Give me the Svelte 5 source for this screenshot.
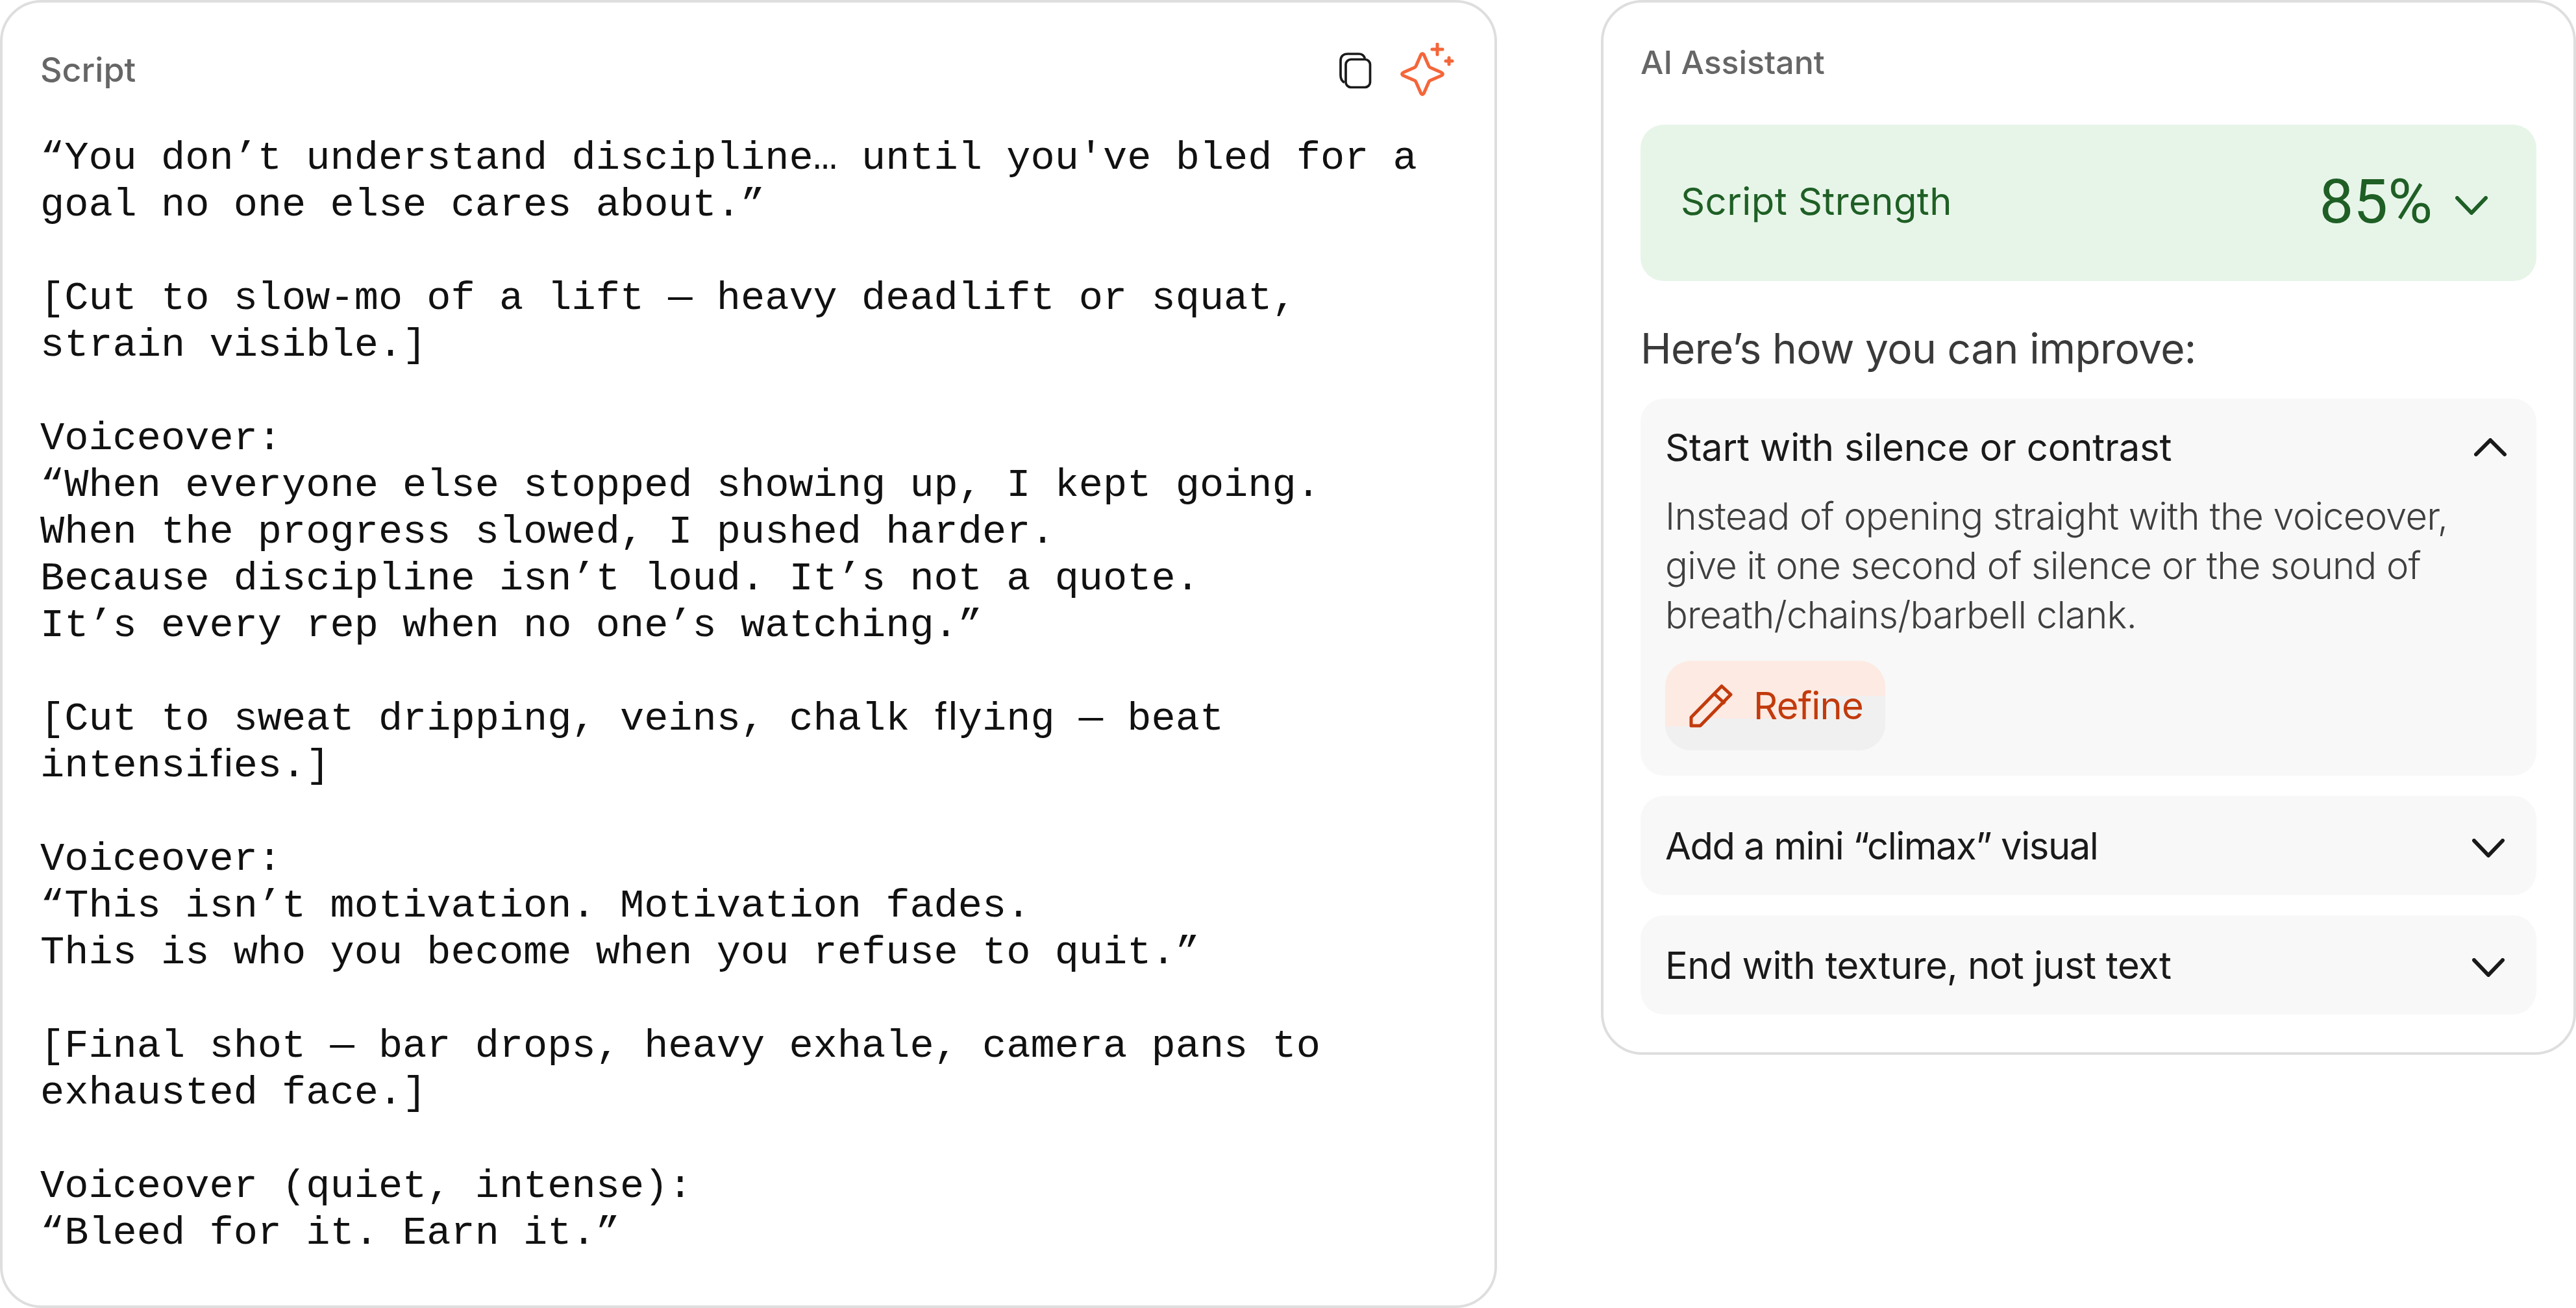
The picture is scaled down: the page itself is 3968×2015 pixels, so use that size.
<script>
  // fi and fl are single cells in the reference's mono font, hence the ligature characters
  const scriptText = `“You don’t understand discipline… until you've bled for a
goal no one else cares about.”

[Cut to slow-mo of a lift — heavy deadlift or squat,
strain visible.]

Voiceover:
“When everyone else stopped showing up, I kept going.
When the progress slowed, I pushed harder.
Because discipline isn’t loud. It’s not a quote.
It’s every rep when no one’s watching.”

[Cut to sweat dripping, veins, chalk ﬂying — beat
intensiﬁes.]

Voiceover:
“This isn’t motivation. Motivation fades.
This is who you become when you refuse to quit.”

[Final shot — bar drops, heavy exhale, camera pans to
exhausted face.]

Voiceover (quiet, intense):
“Bleed for it. Earn it.”`;

  const collapsed = ['Add a mini “climax” visual', 'End with texture, not just text'];
</script>

<div class="page">
  <section class="card script-card">
    <header class="script-head">
      <h2 class="label">Script</h2>
      <div class="tools">
        <svg class="copy" width="50" height="56" viewBox="0 0 50 56" fill="none" stroke="#1a1a1a" stroke-width="3.7">
          <path d="M39.5 9C38 4.5 35 2 30 2H13C6 2 2 6 2 13V35C2 40 4 44 8 46" />
          <rect x="10" y="10.5" width="37.5" height="43" rx="8" />
        </svg>
        <svg class="spark" width="84" height="82" viewBox="0 0 84 82" fill="none" stroke="#f4663a" stroke-width="5" stroke-linecap="round" stroke-linejoin="round">
          <path d="M31 20C32.5 15.5 35.5 15.5 37 20L44 36C44.5 37 45 37.5 46 38L62 45C66.5 47 66.5 49 62 51L46 58C45 58.5 44.5 59 44 60L37 76C35.5 80.5 32.5 80.5 31 76L24 60C23.5 59 23 58.5 22 58L6 51C1.5 49 1.5 47 6 45L22 38C23 37.5 23.5 37 24 36Z" />
          <path d="M49 10H65M57 2V18" />
          <path d="M70 28H80M75 23V33" />
        </svg>
      </div>
    </header>
    <pre class="script-body">{scriptText}</pre>
  </section>

  <aside class="card assistant">
    <h2 class="label">AI Assistant</h2>

    <div class="strength">
      <span class="strength-name">Script Strength</span>
      <span class="strength-score">85%</span>
      <svg class="strength-chev" width="50" height="29" viewBox="0 0 50 29" fill="none" stroke="#1f5f25" stroke-width="6" stroke-linecap="round" stroke-linejoin="round">
        <path d="M3 3L25 26L47 3" />
      </svg>
    </div>

    <h3 class="improve">Here’s how you can improve:</h3>

    <div class="items">
      <div class="item open">
        <div class="item-head">
          <span>Start with silence or contrast</span>
          <svg class="up" width="50" height="28" viewBox="0 0 50 28" fill="none" stroke="#1a1a1a" stroke-width="6" stroke-linecap="round" stroke-linejoin="round">
            <path d="M3 25L25 3L47 25" />
          </svg>
        </div>
        <p class="desc">Instead of opening straight with the voiceover,<br />give it one second of silence or the sound of<br />breath/chains/barbell clank.</p>
        <button class="refine">
          <svg width="67" height="67" viewBox="0 0 67 67" fill="none" stroke="#c23a0c" stroke-width="5" stroke-linejoin="round">
            <path d="M3 51L50 3L64 16L17 64H3Z" />
            <path d="M40 16L55 30" />
          </svg>
          <span>Refine</span>
        </button>
      </div>

      {#each collapsed as title}
        <div class="item">
          <div class="item-head">
            <span>{title}</span>
            <svg class="down" width="50" height="29" viewBox="0 0 50 29" fill="none" stroke="#1a1a1a" stroke-width="6" stroke-linecap="round" stroke-linejoin="round">
              <path d="M3 3L25 26L47 3" />
            </svg>
          </div>
        </div>
      {/each}
    </div>
  </aside>
</div>

<style>
  :global(body) {
    background: #fff;
  }

  .page {
    display: flex;
    align-items: flex-start;
    gap: 160px;
    width: 3968px;
    font-family: Inter, "Liberation Sans", sans-serif;
  }

  .card {
    box-sizing: border-box;
    background: #fff;
    border: 4px solid #dedede;
    border-radius: 64px;
  }

  .script-card {
    width: 2306px;
    height: 2015px;
    padding: 60px 58px;
  }

  .script-head {
    display: flex;
    justify-content: space-between;
    align-items: flex-start;
    height: 144px;
  }

  .label {
    margin: 2px 0 0;
    font-size: 50px;
    line-height: 60px;
    font-weight: 500;
    color: #666;
  }

  .script-head .label {
    margin-top: 14px;
    font-size: 52px;
  }

  .tools {
    display: flex;
    align-items: flex-start;
    gap: 44px;
    margin-right: 3px;
  }

  .copy {
    margin-top: 17px;
  }

  .spark {
    margin-top: 2px;
  }

  .script-body {
    margin: 0;
    font-family: "Liberation Mono", monospace;
    font-size: 62px;
    line-height: 72px;
    color: #111;
  }

  .assistant {
    width: 1502px;
    height: 1625px;
    padding: 60px 57px;
  }

  .strength {
    display: flex;
    align-items: center;
    height: 241px;
    margin-top: 66px;
    padding: 0 75px 0 62px;
    background: #e7f5e9;
    border-radius: 36px;
    color: #1f5f25;
  }

  .strength-name {
    flex: 1;
    margin-top: -6px;
    font-size: 58px;
    letter-spacing: 0.4px;
  }

  .strength-score {
    margin-right: 35px;
    margin-top: -4px;
    font-family: Roboto, sans-serif;
    font-size: 94px;
  }

  .strength-chev {
    margin-top: 8px;
  }

  .improve {
    margin: 62px 0 35px;
    font-size: 64px;
    line-height: 84px;
    font-weight: 400;
    letter-spacing: -0.6px;
    color: #3a3a3a;
  }

  .items {
    display: flex;
    flex-direction: column;
    gap: 31px;
  }

  .item {
    padding: 0 40px 0 38px;
    background: #f8f8f8;
    border-radius: 36px;
  }

  .item.open {
    padding-bottom: 39px;
  }

  .item-head {
    display: flex;
    justify-content: space-between;
    align-items: center;
    height: 153px;
    font-size: 58px;
    color: #1a1a1a;
  }

  .open .item-head {
    height: 150px;
    letter-spacing: -0.2px;
  }

  .item:nth-child(2) .item-head {
    letter-spacing: -1.5px;
  }

  .item:nth-child(3) .item-head {
    letter-spacing: -0.6px;
  }

  .up {
    margin-right: 6px;
  }

  .down {
    margin-right: 9px;
    margin-top: 8px;
  }

  .desc {
    margin: -7px 0 0;
    font-size: 58px;
    line-height: 76px;
    font-weight: 300;
    letter-spacing: -0.8px;
    color: #3f3f3f;
  }

  .refine {
    display: flex;
    align-items: center;
    gap: 32px;
    width: 339px;
    height: 138px;
    margin-top: 33px;
    padding: 0 0 0 37px;
    border: none;
    border-radius: 40px;
    /* peach highlight stops in steps over the grey, as in the reference */
    background:
      linear-gradient(#fdeae2, #fdeae2) 0 0 / 100% 54px no-repeat,
      linear-gradient(#fdeae2, #fdeae2) 0 0 / 235px 89px no-repeat,
      linear-gradient(#fdeae2, #fdeae2) 0 0 / 53px 101px no-repeat,
      #f0f0f0;
    font-family: inherit;
    font-size: 58px;
    letter-spacing: -0.8px;
    color: #c23a0c;
  }
</style>
